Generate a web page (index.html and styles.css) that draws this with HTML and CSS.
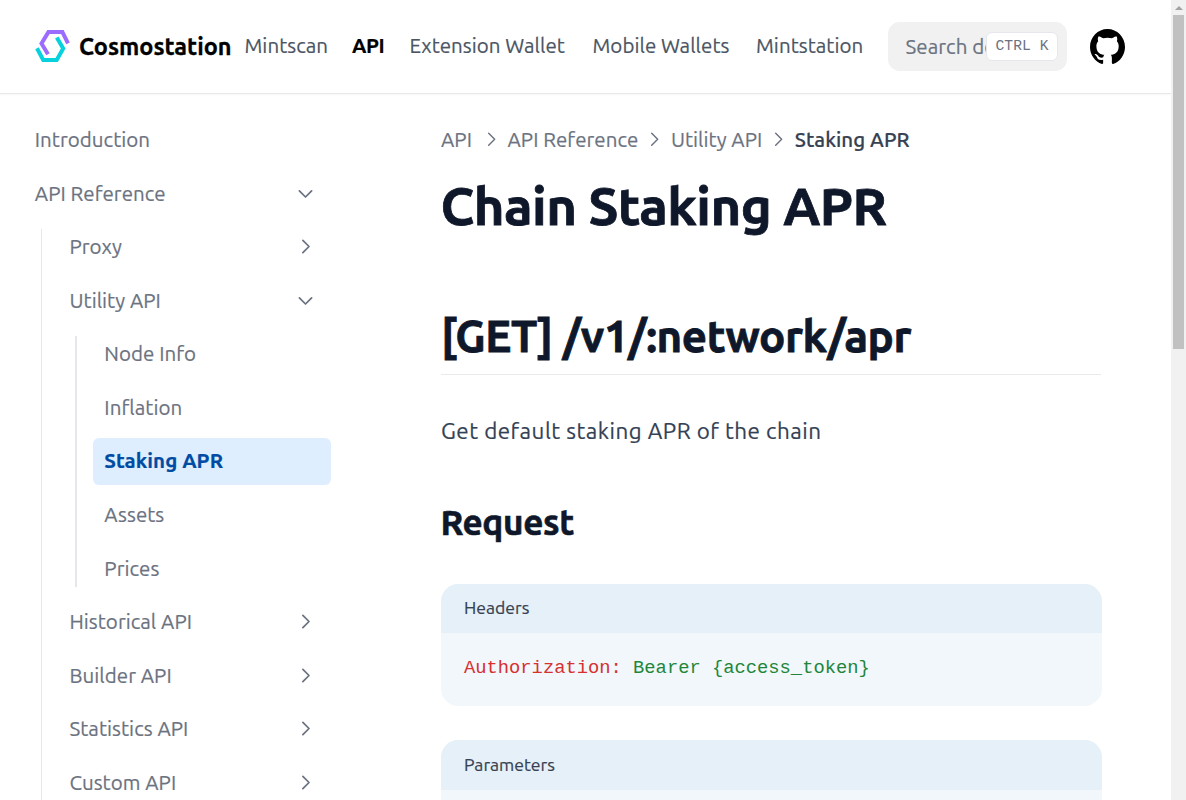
FILE: index.html
```
<!DOCTYPE html>
<html lang="en">
<head>
<meta charset="utf-8">
<title>Chain Staking APR</title>
<link rel="stylesheet" href="styles.css">
</head>
<body>
<svg class="defs" aria-hidden="true"><symbol id="chev" viewBox="0 0 24 24"><path d="M9 5l7 7-7 7" fill="none" stroke="currentColor" stroke-linecap="round" stroke-linejoin="round"/></symbol></svg>
<div class="page">
  <header class="topbar">
    <a class="brand">
      <svg class="brand-mark" viewBox="0 0 35 34" fill="none" stroke-width="4"><path stroke="#9c6cff" d="M33 14.4 27.4 3.1H13.4L6.5 14.4 13 25.3"/><path stroke="#05d2dd" d="M2 19.2 8.2 30.9H21.7L28.2 19.4 21.8 8.6"/></svg>
      <span>Cosmostation</span>
    </a>
    <nav class="topnav">
      <a>Mintscan</a><a class="current">API</a><a>Extension Wallet</a><a>Mobile Wallets</a><a>Mintstation</a>
    </nav>
    <div class="search"><span class="search-text">Search documentation…</span><kbd>CTRL K</kbd></div>
    <svg class="github" viewBox="3 3 18 18"><path d="M12 3C7.0275 3 3 7.12937 3 12.2276C3 16.3109 5.57625 19.7597 9.15374 20.9824C9.60374 21.0631 9.77249 20.7863 9.77249 20.5441C9.77249 20.3249 9.76125 19.5982 9.76125 18.8254C7.5 19.2522 6.915 18.2602 6.735 17.7412C6.63375 17.4759 6.19499 16.6569 5.8125 16.4378C5.4975 16.2647 5.0475 15.838 5.80124 15.8264C6.51 15.8149 7.01625 16.4954 7.18499 16.7723C7.99499 18.1679 9.28875 17.7758 9.80625 17.5335C9.885 16.9337 10.1212 16.53 10.38 16.2993C8.3775 16.0687 6.285 15.2728 6.285 11.7432C6.285 10.7397 6.63375 9.9092 7.20749 9.26326C7.1175 9.03257 6.8025 8.08674 7.2975 6.81794C7.2975 6.81794 8.05125 6.57571 9.77249 7.76377C10.4925 7.55615 11.2575 7.45234 12.0225 7.45234C12.7875 7.45234 13.5525 7.55615 14.2725 7.76377C15.9937 6.56418 16.7475 6.81794 16.7475 6.81794C17.2424 8.08674 16.9275 9.03257 16.8375 9.26326C17.4113 9.9092 17.76 10.7281 17.76 11.7432C17.76 15.2843 15.6563 16.0687 13.6537 16.2993C13.98 16.5877 14.2613 17.1414 14.2613 18.0065C14.2613 19.2407 14.25 20.2326 14.25 20.5441C14.25 20.7863 14.4188 21.0746 14.8688 20.9824C16.6554 20.364 18.2079 19.1866 19.3078 17.6162C20.4077 16.0457 20.9995 14.1611 21 12.2276C21 7.12937 16.9725 3 12 3Z"/></svg>
  </header>
  <div class="columns">
    <aside class="sidebar">
      <a class="item">Introduction</a>
      <a class="item">API Reference<svg class="chev open"><use href="#chev"/></svg></a>
      <div class="branch">
        <a class="item">Proxy<svg class="chev"><use href="#chev"/></svg></a>
        <a class="item">Utility API<svg class="chev open"><use href="#chev"/></svg></a>
        <div class="branch inner">
          <a class="item">Node Info</a>
          <a class="item">Inflation</a>
          <a class="item active">Staking APR</a>
          <a class="item">Assets</a>
          <a class="item">Prices</a>
        </div>
        <a class="item">Historical API<svg class="chev"><use href="#chev"/></svg></a>
        <a class="item">Builder API<svg class="chev"><use href="#chev"/></svg></a>
        <a class="item">Statistics API<svg class="chev"><use href="#chev"/></svg></a>
        <a class="item">Custom API<svg class="chev"><use href="#chev"/></svg></a>
      </div>
    </aside>
    <main class="content">
      <div class="crumbs"><span class="first">API</span><svg><use href="#chev"/></svg><span>API Reference</span><svg><use href="#chev"/></svg><span>Utility API</span><svg><use href="#chev"/></svg><span class="here">Staking APR</span></div>
      <h1>Chain Staking APR</h1>
      <h2>[GET] /v1/:network/apr</h2>
      <p>Get default staking APR of the chain</p>
      <h3>Request</h3>
      <section class="code"><div class="code-title">Headers</div><pre><span class="key">Authorization:</span> <span class="value">Bearer {access_token}</span></pre></section>
      <section class="code"><div class="code-title">Parameters</div><pre></pre></section>
    </main>
  </div>
</div>
<div class="scrollbar"><i class="arrow"></i><i class="thumb"></i></div>
</body>
</html>
```
FILE: styles.css
```
* { box-sizing: border-box; }
body {
  margin: 0;
  height: 800px;
  overflow: hidden;
  display: flex;
  background: #fff;
  font-family: Ubuntu, "Noto Sans", sans-serif;
  font-size: 20.5px;
  letter-spacing: 0.05px;
  -webkit-text-stroke: 0.2px currentColor;
  color: #6b7280;
}
.defs { position: absolute; width: 0; height: 0; }
.page { width: 1171px; height: 800px; overflow: hidden; }

.topbar {
  height: 93px;
  padding-left: 35px;
  display: flex;
  align-items: center;
  box-shadow: 0 1px 0 #e9e9ea, 0 2px 1px #f9f9f9;
}
.brand {
  width: 209.5px;
  padding-bottom: 2px;
  display: flex;
  align-items: center;
  gap: 9px;
  color: #000;
  font-size: 23.5px;
  font-weight: 700;
  letter-spacing: 0;
  -webkit-text-stroke: 0.3px #000;
}
.brand-mark { width: 35px; height: 34px; }
.topnav {
  width: 643.5px;
  padding-bottom: 2px;
  display: grid;
  grid-template-columns: 107.5px 57.5px 183px 163.5px auto;
  color: #4b5563;
  white-space: nowrap;
}
.topnav .current { color: #000; font-weight: 700; letter-spacing: -0.4px; }
.search {
  width: 179px;
  height: 49px;
  padding: 0 9px 0 17.5px;
  display: flex;
  align-items: center;
  border-radius: 11.7px;
  background: #f1f1f1;
}
.search-text { flex: 1; min-width: 0; overflow: hidden; white-space: nowrap; }
kbd {
  width: 72px;
  height: 29px;
  border: 1px solid #e5e7eb;
  border-radius: 6px;
  background: #fff;
  font: 14.65px/26px "Liberation Mono", monospace;
  text-align: center;
  white-space: pre;
  -webkit-text-stroke-width: 0;
}
.github { width: 35px; height: 35px; margin-left: 23px; }

.columns { display: flex; }
.sidebar { width: 331px; padding: 23.6px 0 0 23.4px; }
.item {
  height: 46.9px;
  margin-bottom: 6.67px;
  padding: 0 15px 0.7px 11.4px;
  display: flex;
  align-items: center;
  justify-content: space-between;
  border-radius: 6px;
}
.item.active { background: #deeeff; color: #004ca3; font-weight: 700; }
.chev { width: 21px; height: 21px; stroke-width: 2; }
.chev.open { transform: rotate(90deg); }
.branch {
  padding-left: 34.7px;
  background: linear-gradient(#e5e7eb, #e5e7eb) 17.6px 5.5px / 1px 100% no-repeat;
}
.branch.inner { background: linear-gradient(#e5e7eb, #e5e7eb) 16.9px 5.5px / 2px 251px no-repeat; }
.branch.inner .item { margin-left: 0.2px; }

.content { width: 660px; margin-left: 110px; padding-top: 33px; }
.crumbs { height: 26px; display: flex; align-items: center; white-space: nowrap; }
.crumbs svg { width: 20.5px; height: 20.5px; margin: 0 6px; stroke-width: 1.7; }
.crumbs .first { margin-right: 3px; }
.crumbs .here { color: #374151; font-weight: 500; }
h1, h2, h3 {
  margin: 0 0 0 -0.5px;
  color: #0f172a;
  font-weight: 700;
  letter-spacing: -0.01em;
  -webkit-text-stroke: 0.8px #0f172a;
}
h1 { margin-top: 24px; font-size: 52.7px; line-height: 59px; }
h2 { margin: 76px 0 0; height: 64px; font-size: 43.9px; line-height: 50px; border-bottom: 1px solid #e9eaeb; }
p { margin: 35px 0 0; color: #334155; font-size: 22.4px; letter-spacing: 0.5px; line-height: 42px; }
h3 { margin-top: 49px; font-size: 35.1px; line-height: 42px; -webkit-text-stroke-width: 0.6px; }
.code {
  width: 660.5px;
  margin-top: 41px;
  height: 122px;
  overflow: hidden;
  border-radius: 17.5px;
  background: #f1f7fb;
}
.code + .code { margin-top: 34px; }
.code-title {
  height: 49.4px;
  padding-left: 23px;
  background: #e5f0f8;
  color: #374151;
  font-size: 17.6px;
  letter-spacing: 0;
  line-height: 48px;
}
.code + .code .code-title { height: 50px; line-height: 50px; }
.code pre {
  margin: 0;
  padding: 24px 23px;
  font: 18.79px/23px "Liberation Mono", monospace;
  letter-spacing: 0;
  -webkit-text-stroke-width: 0;
}
.key { color: #d73030; }
.value { color: #22863a; }

.scrollbar { width: 15px; height: 800px; background: #f1f1f1; }
.arrow { display: block; width: 8px; height: 4px; margin: 6px 0 5px 4px; background: #a3a3a3; clip-path: polygon(50% 0, 100% 100%, 0 100%); }
.thumb { display: block; width: 11px; height: 334px; margin-left: 2px; background: #c1c1c1; }
```
